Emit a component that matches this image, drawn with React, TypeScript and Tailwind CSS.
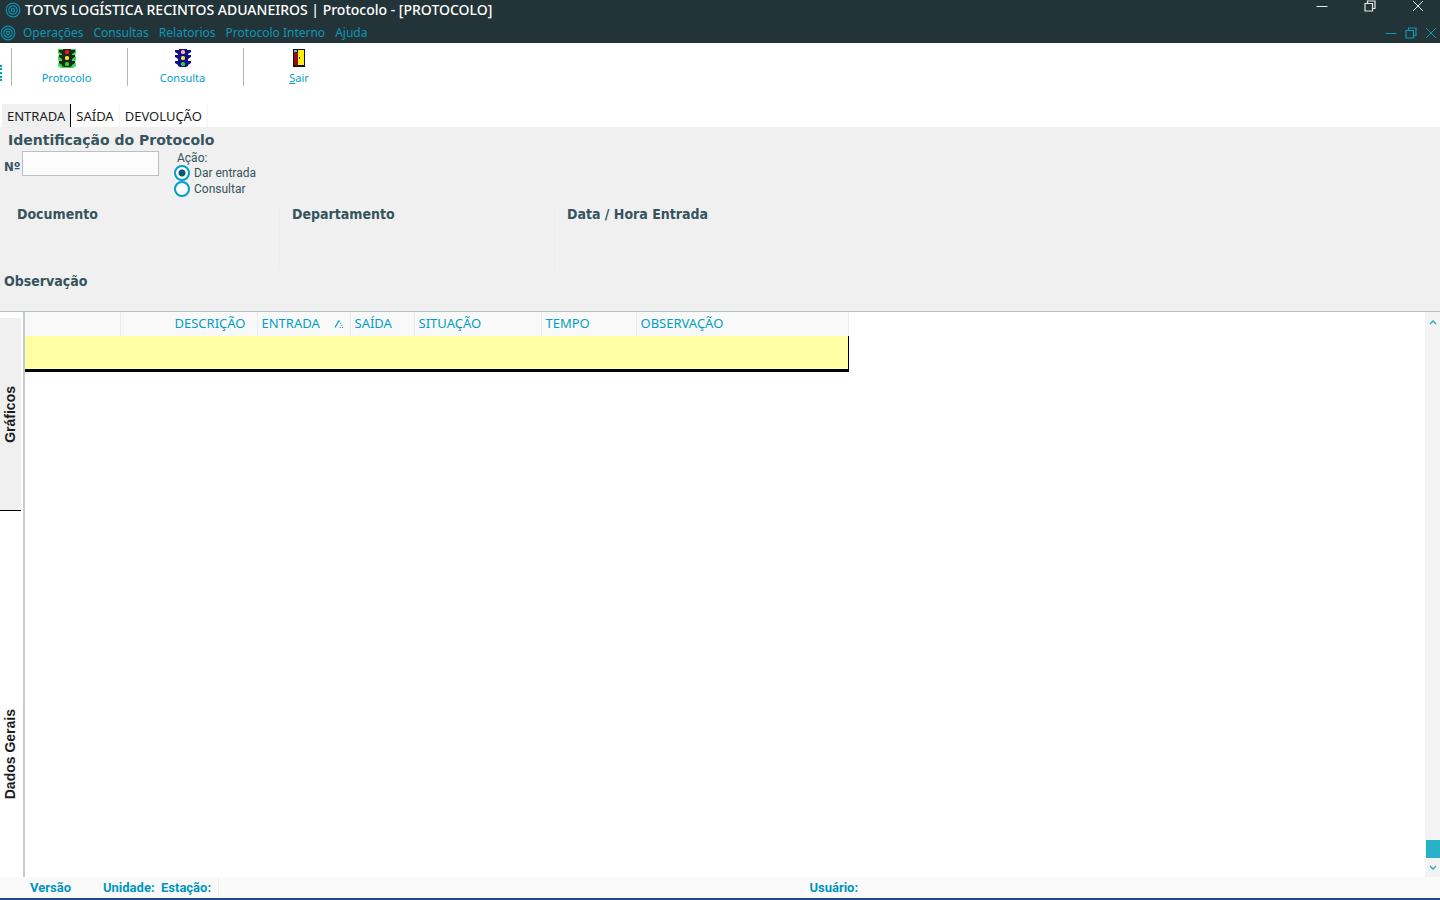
import { useState } from 'react';
import clsx from 'clsx';

const menuItems = ['Operações', 'Consultas', 'Relatorios', 'Protocolo Interno', 'Ajuda'];

const tabs = [
    { id: 'entrada', label: 'ENTRADA' },
    { id: 'saida', label: 'SAÍDA' },
    { id: 'devolucao', label: 'DEVOLUÇÃO' },
];

const columns = [
    { label: '', width: 'w-[95px]', pad: '' },
    { label: 'DESCRIÇÃO', width: 'w-[137px]', pad: 'pl-[54px]' },
    { label: 'ENTRADA', width: 'w-[93px]', pad: 'pl-1', sorted: true },
    { label: 'SAÍDA', width: 'w-[64px]', pad: 'pl-1' },
    { label: 'SITUAÇÃO', width: 'w-[127px]', pad: 'pl-1' },
    { label: 'TEMPO', width: 'w-[95px]', pad: 'pl-1' },
    { label: 'OBSERVAÇÃO', width: 'w-[212px]', pad: 'pl-1' },
];

function TotvsLogo() {
    return (
        <svg viewBox="0 0 16 16" className="size-4 shrink-0" fill="none" stroke="#0f8fb0">
            <circle cx="8" cy="8" r="6.8" strokeWidth="1.2" />
            <circle cx="8" cy="8" r="4.2" strokeWidth="1.2" />
            <circle cx="8" cy="8" r="1.6" strokeWidth="1.2" />
        </svg>
    );
}

function MinimizeIcon() {
    return (
        <svg viewBox="0 0 12 12" className="size-3" fill="none" stroke="currentColor">
            <path d="M0.5 6.5h11" />
        </svg>
    );
}

function RestoreIcon() {
    return (
        <svg viewBox="0 0 12 12" className="size-3" fill="none" stroke="currentColor" strokeWidth="1.2">
            <path d="M1 3.5h7.5V11H1zM3.5 3.5V1H11v7.5H8.5" />
        </svg>
    );
}

function CloseIcon() {
    return (
        <svg viewBox="0 0 12 12" className="size-3" fill="none" stroke="currentColor">
            <path d="M1 1l10 10M11 1L1 11" />
        </svg>
    );
}

function TrafficLight({ body, glow }: { body: string; glow?: string }) {
    return (
        <svg viewBox="0 0 18 20" className="h-5 w-[18px]">
            {glow && <path fill={glow} d="M0 1h18v4l-1 2 1 2v3l-1 2 1 2v2l-3 2H3l-3-2v-2l1-2-1-2V9l1-2-1-2z" />}
            <path
                fill={body}
                d="M5 1h8v1h4v2l-3 2v1h3v2l-3 2v2h3v2l-3 2v1l-2 1H6l-2-1v-1l-3-2v-2h3v-2L1 9V7h3V6L1 4V2h4z"
            />
            <rect x="7" y="2" width="4" height="4" rx="1.5" fill={glow ? '#f01818' : '#ffb0a8'} />
            <rect x="7" y="8" width="4" height="4" rx="1.5" fill="#f5e02c" />
            <rect x="7" y="14" width="4" height="4" rx="1.5" fill="#35d038" />
        </svg>
    );
}

function DoorIcon() {
    return (
        <svg viewBox="0 0 14 20" className="h-5 w-3.5">
            <path fill="#111" d="M1 1h12v18H1z" />
            <path fill="#ffee10" d="M6 2h6v15H6z" />
            <path fill="#8c1018" d="M2 3l4 2v13l-4-1z" />
            <path fill="#5fc8d8" d="M2 2h3v2H2z" />
            <path fill="#333" d="M7 9h1v2H7z" />
        </svg>
    );
}

function ToolButton({ icon, children }: { icon: React.ReactNode; children: React.ReactNode }) {
    return (
        <button
            type="button"
            className="flex h-[38px] w-[116px] flex-col items-center gap-0.5 pr-1.5 text-[11px] leading-4 text-[#009fc4]"
        >
            {icon}
            <span>{children}</span>
        </button>
    );
}

function WindowControls({ target }: { target: string }) {
    return (
        <>
            <button type="button" aria-label={`Minimizar ${target}`}>
                <MinimizeIcon />
            </button>
            <button type="button" aria-label={`Restaurar ${target}`}>
                <RestoreIcon />
            </button>
            <button type="button" aria-label={`Fechar ${target}`}>
                <CloseIcon />
            </button>
        </>
    );
}

function Radio({ label, value, current, onChange }: {
    label: string;
    value: string;
    current: string;
    onChange: (value: string) => void;
}) {
    return (
        <label className="flex h-4 items-center gap-1">
            <input
                type="radio"
                name="acao"
                value={value}
                checked={current === value}
                onChange={() => onChange(value)}
                className="size-4 shrink-0 appearance-none rounded-full border-2 border-[#009fc8] bg-white checked:bg-[radial-gradient(circle,#0b5575_3px,#fff_4px)]"
            />
            {label}
        </label>
    );
}

export default function App() {
    const [tab, setTab] = useState('entrada');
    const [side, setSide] = useState('graficos');
    const [action, setAction] = useState('entrada');

    return (
        <div className="flex min-h-screen flex-col bg-white font-['Noto_Sans',sans-serif] text-[13px]">
            <header className="bg-[#233439]">
                <div className="flex h-5 items-center pl-[5px] pr-4">
                    <TotvsLogo />
                    <h1 className="ml-1 text-[14px] font-medium leading-5 text-white">
                        TOTVS LOGÍSTICA RECINTOS ADUANEIROS | Protocolo - [PROTOCOLO]
                    </h1>
                    <div className="ml-auto flex h-5 items-start gap-9 text-[#e4eaec]">
                        <WindowControls target="aplicativo" />
                    </div>
                </div>
                <div className="flex h-[23px] items-center pr-[3px] pt-0.5 text-[#0f95b5]">
                    <TotvsLogo />
                    <nav className="ml-[7px] flex gap-2.5 text-[12px]">
                        {menuItems.map((item) => (
                            <button key={item} type="button">
                                {item}
                            </button>
                        ))}
                    </nav>
                    <div className="ml-auto flex items-center gap-2">
                        <WindowControls target="janela" />
                    </div>
                </div>
            </header>

            <div className="flex h-[61px] items-start pt-[5px]">
                <div className="mt-[17px] h-4 w-[3px] border-l-2 border-dotted border-[#009fc4]" />
                <div className="ml-2 flex divide-x divide-[#b4b4b4]">
                    <div className="h-[38px] w-0" />
                    <ToolButton icon={<TrafficLight body="#1c2a1c" glow="#3ddc55" />}>Protocolo</ToolButton>
                    <ToolButton icon={<TrafficLight body="#10108c" />}>Consulta</ToolButton>
                    <ToolButton icon={<DoorIcon />}>
                        <u>S</u>air
                    </ToolButton>
                </div>
            </div>

            <div role="tablist" className="flex h-[23px] pl-0.5 text-[13px] text-[#1c1c1c]">
                {tabs.map(({ id, label }) => (
                    <button
                        key={id}
                        type="button"
                        role="tab"
                        aria-selected={tab === id}
                        onClick={() => setTab(id)}
                        className={clsx(
                            'border-r px-[5px] pt-0.5',
                            tab === id ? 'border-black bg-[#f0f0f0]' : 'border-[#f4f4f4]',
                        )}
                    >
                        {label}
                    </button>
                ))}
            </div>

            <section className="h-[184px] bg-[#f0f0f0] font-['DejaVu_Sans_Condensed','DejaVu_Sans',sans-serif] text-[#35545e]">
                <h2 className="pl-2 pt-[3px] font-['DejaVu_Sans',sans-serif] text-[14px] font-bold leading-5">
                    Identificação do Protocolo
                </h2>
                <div className="flex h-[50px] pl-1 pt-px">
                    <label htmlFor="numero" className="w-[18px] pt-1.5 text-[13px] font-bold">
                        Nº
                    </label>
                    <input
                        id="numero"
                        type="text"
                        className="h-[25px] w-[137px] border border-[#b9c0c2] bg-[#fcfcfc] px-1 outline-none"
                    />
                    <fieldset className="ml-[15px] font-['Roboto',sans-serif] text-[12px] leading-4">
                        <legend className="pl-[3px] leading-[14px]">Ação:</legend>
                        <Radio label="Dar entrada" value="entrada" current={action} onChange={setAction} />
                        <Radio label="Consultar" value="consultar" current={action} onChange={setAction} />
                    </fieldset>
                </div>
                <div className="mt-1 flex h-[67px] text-[14px] font-bold leading-5">
                    <div className="w-[280px] border-r border-[#ededed] pl-[17px]">Documento</div>
                    <div className="w-[275px] border-r border-[#ededed] pl-3">Departamento</div>
                    <div className="pl-3">Data / Hora Entrada</div>
                </div>
                <div className="pl-1 text-[14px] font-bold leading-5">Observação</div>
            </section>

            <main className="flex flex-1 border-t border-[#b5c4c0]">
                <div
                    role="tablist"
                    aria-orientation="vertical"
                    className="mt-1.5 flex w-[21px] flex-col font-['Liberation_Sans',sans-serif] text-[14px] font-bold text-[#1c1c1c]"
                >
                    <button
                        type="button"
                        role="tab"
                        aria-selected={side === 'graficos'}
                        onClick={() => setSide('graficos')}
                        className={clsx(
                            'flex h-[193px] items-center justify-center border-b border-black',
                            side === 'graficos' && 'bg-[#f0f0f0]',
                        )}
                    >
                        <span className="rotate-180 [writing-mode:vertical-rl]">Gráficos</span>
                    </button>
                    <button
                        type="button"
                        role="tab"
                        aria-selected={side === 'dados'}
                        onClick={() => setSide('dados')}
                        className={clsx(
                            'flex flex-1 items-center justify-center pt-[120px]',
                            side === 'dados' && 'bg-[#f0f0f0]',
                        )}
                    >
                        <span className="rotate-180 [writing-mode:vertical-rl]">Dados Gerais</span>
                    </button>
                </div>

                <div className="ml-0.5 flex-1 border-l-2 border-[#c6caca]">
                    <table className="w-[823px] table-fixed border-collapse">
                        <thead>
                            <tr className="h-6 bg-[#f9f9f9]">
                                {columns.map(({ label, width, pad, sorted }, index) => (
                                    <th
                                        key={index}
                                        className={clsx(
                                            'border-r border-[#ececec] p-0 text-left text-[13px] font-normal text-[#009fc4]',
                                            width,
                                        )}
                                    >
                                        <div className={clsx('flex items-center whitespace-nowrap', pad)}>
                                            {label}
                                            {sorted && (
                                                <svg viewBox="0 0 10 8" className="ml-auto mr-1.5 h-2 w-2.5" fill="none" stroke="#009fc4">
                                                    <path d="M1 7.500L5 0.500" strokeWidth="1.300" />
                                                    <path d="M5 0.500L9 7.500H5" strokeWidth="0.800" strokeDasharray="1.500 1" />
                                                </svg>
                                            )}
                                        </div>
                                    </th>
                                ))}
                            </tr>
                        </thead>
                        <tbody>
                            <tr className="h-[34px] bg-[#ffffa6]">
                                <td colSpan={columns.length} className="border-b-[3px] border-r border-black" />
                            </tr>
                        </tbody>
                    </table>
                </div>

                <div className="flex w-[15px] flex-col bg-[#f3f3f3] text-[#27a9bf]">
                    <button type="button" aria-label="Rolar para cima" className="flex h-5 items-center justify-center">
                        <svg viewBox="0 0 8 5" className="h-[5px] w-2" fill="none" stroke="currentColor" strokeWidth="1.300">
                            <path d="M1 4l3-3 3 3" />
                        </svg>
                    </button>
                    <div className="ml-px mt-auto h-[18px] bg-[#27b0c6]" />
                    <button type="button" aria-label="Rolar para baixo" className="flex h-[19px] items-center justify-center">
                        <svg viewBox="0 0 8 5" className="h-[5px] w-2" fill="none" stroke="currentColor" strokeWidth="1.300">
                            <path d="M1 1l3 3 3-3" />
                        </svg>
                    </button>
                </div>
            </main>

            <footer className="flex h-[23px] items-center border-b-2 border-[#1f478c] bg-[#fafafa] font-['Roboto',sans-serif] text-[13px] font-bold text-[#0095bd]">
                <span className="w-[103px] pl-[30px]">Versão</span>
                <span className="w-[58px]">Unidade:</span>
                <span className="w-[58px] border-r border-[#eeeeee]">Estação:</span>
                <span className="ml-[41%]">Usuário:</span>
            </footer>
        </div>
    );
}
